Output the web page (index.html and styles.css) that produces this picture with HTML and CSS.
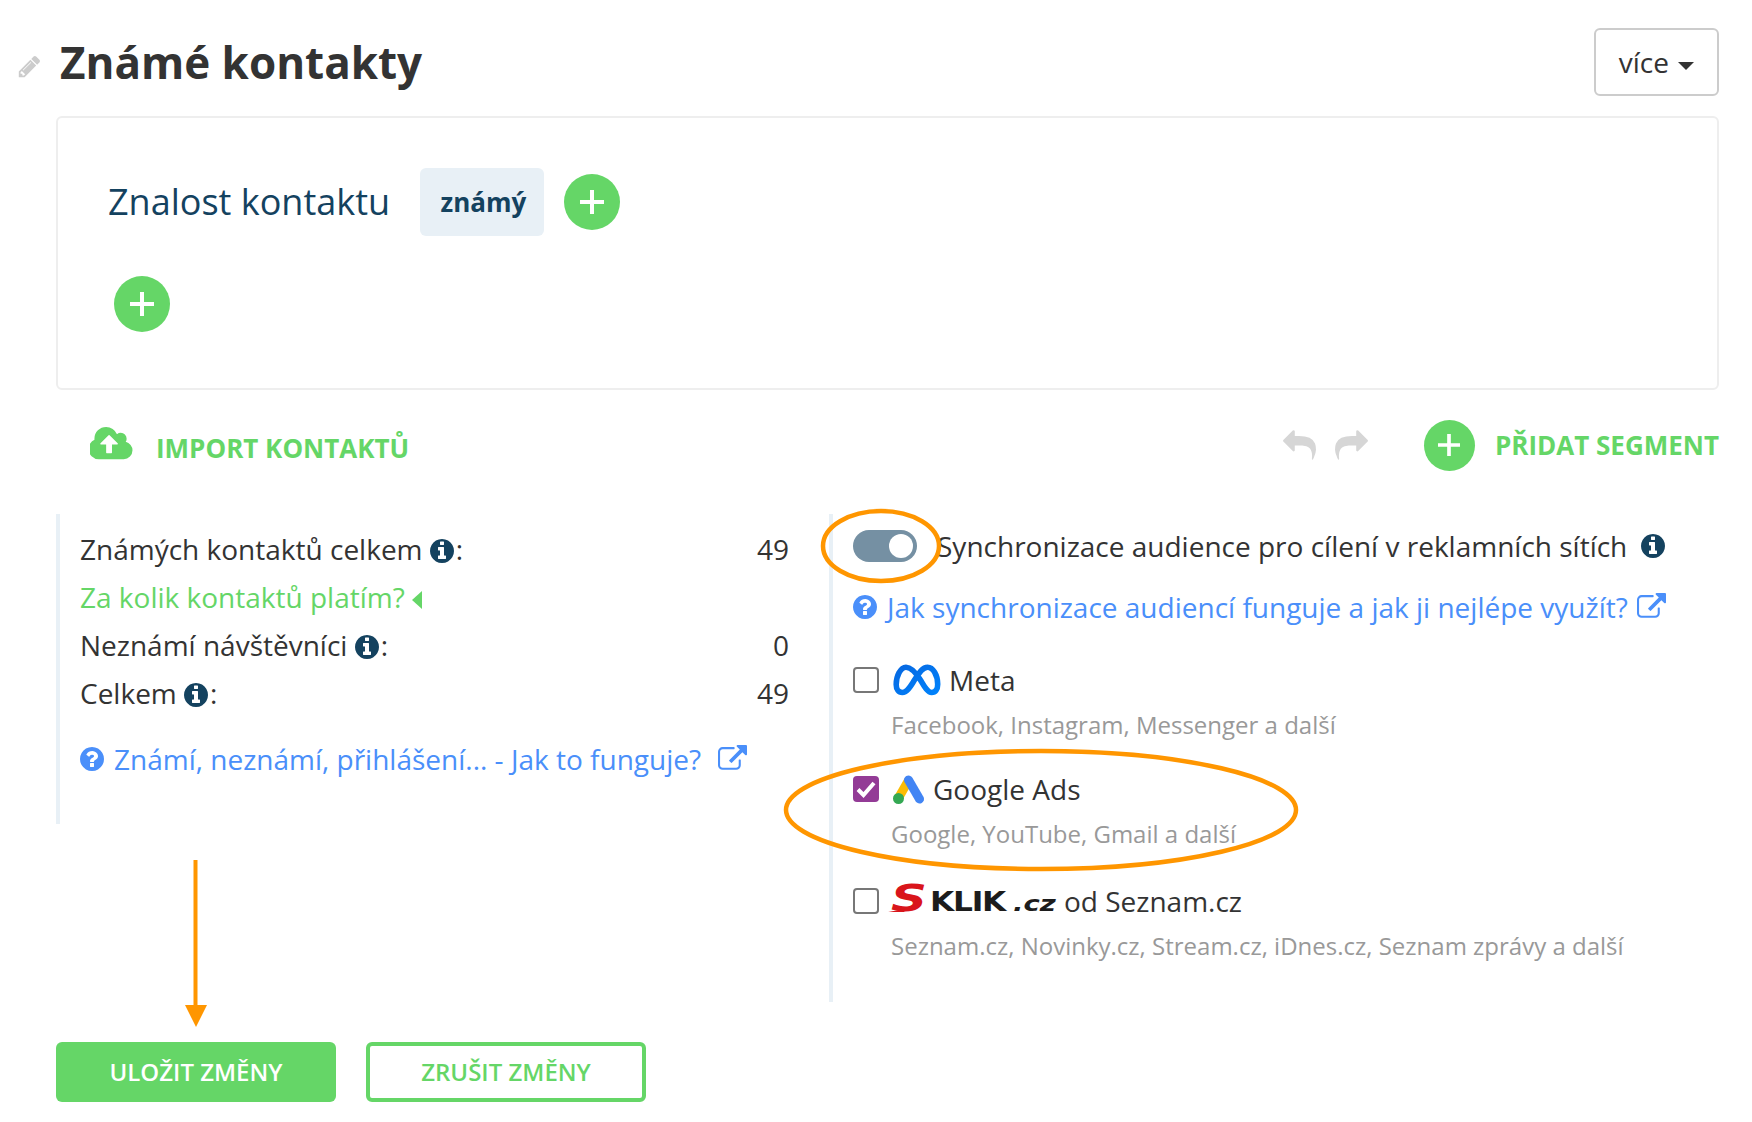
FILE: index.html
```html
<!DOCTYPE html>
<html lang="cs">
<head>
<meta charset="utf-8">
<title>Známé kontakty</title>
<link rel="stylesheet" href="styles.css">
</head>
<body>
<svg width="0" height="0" class="defs">
  <defs>
    <symbol id="i-info" viewBox="0 0 1792 1792"><path d="M1152 1376v-160q0-14-9-23t-23-9h-96v-512q0-14-9-23t-23-9h-320q-14 0-23 9t-9 23v160q0 14 9 23t23 9h96v320h-96q-14 0-23 9t-9 23v160q0 14 9 23t23 9h448q14 0 23-9t9-23zm-128-896v-160q0-14-9-23t-23-9h-192q-14 0-23 9t-9 23v160q0 14 9 23t23 9h192q14 0 23-9t9-23zm640 416q0 209-103 385.5t-279.5 279.5-385.5 103-385.5-103-279.5-279.5-103-385.5 103-385.5 279.5-279.5 385.5-103 385.5 103 279.5 279.5 103 385.5z"/></symbol>
    <symbol id="i-question" viewBox="0 0 1792 1792"><path d="M1024 1376v-192q0-14-9-23t-23-9h-192q-14 0-23 9t-9 23v192q0 14 9 23t23 9h192q14 0 23-9t9-23zm256-672q0-88-55.5-163t-138.5-116-170-41q-243 0-371 213-15 24 8 42l132 100q7 6 19 6 16 0 25-12 53-68 86-92 34-24 86-24 48 0 85.5 26t37.5 59q0 38-20 61t-68 45q-63 28-115.5 86.5t-52.5 125.5v36q0 14 9 23t23 9h192q14 0 23-9t9-23q0-19 21.5-49.5t54.5-49.5q32-18 49-28.5t46-35 44.5-48 28-60.5 12.5-81zm384 192q0 209-103 385.5t-279.5 279.5-385.5 103-385.5-103-279.5-279.5-103-385.5 103-385.5 279.5-279.5 385.5-103 385.5 103 279.5 279.5 103 385.5z"/></symbol>
    <symbol id="i-ext" viewBox="0 0 1792 1792"><path d="M1408 928v320q0 119-84.5 203.5t-203.5 84.5h-832q-119 0-203.5-84.5t-84.5-203.5v-832q0-119 84.5-203.5t203.5-84.5h704q14 0 23 9t9 23v64q0 14-9 23t-23 9h-704q-66 0-113 47t-47 113v832q0 66 47 113t113 47h832q66 0 113-47t47-113v-320q0-14 9-23t23-9h64q14 0 23 9t9 23zm384-864v512q0 26-19 45t-45 19-45-19l-176-176-652 652q-10 10-23 10t-23-10l-114-114q-10-10-10-23t10-23l652-652-176-176q-19-19-19-45t19-45 45-19h512q26 0 45 19t19 45z"/></symbol>
    <symbol id="i-undo" viewBox="0 0 1792 1792"><path d="M1792 1120q0 166-127 451-3 7-10.5 24t-13.5 30-13 22q-12 17-28 17-15 0-23.5-10t-8.5-25q0-9 2.5-26.5t2.5-23.5q5-68 5-123 0-101-17.5-181t-48.5-138.5-80-101-105.5-69.5-133-42.5-154-21.5-175.5-6h-224v256q0 26-19 45t-45 19-45-19l-512-512q-19-19-19-45t19-45l512-512q19-19 45-19t45 19 19 45v256h224q713 0 875 403 53 134 53 333z"/></symbol>
    <symbol id="i-plus" viewBox="0 0 24 24"><path d="M10 0h4v10h10v4H14v10h-4V14H0v-4h10z"/></symbol>
  </defs>
</svg>

<div class="page">
  <header class="head">
    <svg class="pencil" viewBox="0 0 1792 1792"><path d="M491 1536l91-91-235-235-91 91v107h128v128h107zm523-928q0-22-22-22-10 0-17 7l-542 542q-7 7-7 17 0 22 22 22 10 0 17-7l542-542q7-7 7-17zm-54-192l416 416-832 832h-416v-416zm683 96q0 53-37 90l-166 166-416-416 166-165q36-38 90-38 53 0 91 38l235 234q37 39 37 91z"/></svg>
    <h1 class="title">Známé kontakty</h1>
    <button class="more">více <span class="caret"></span></button>
  </header>

  <section class="box">
    <div class="box-row">
      <span class="crit">Znalost kontaktu</span>
      <span class="tag">známý</span>
      <span class="add"><svg class="plus"><use href="#i-plus"/></svg></span>
    </div>
    <div class="box-add">
      <span class="add"><svg class="plus"><use href="#i-plus"/></svg></span>
    </div>
  </section>

  <div class="actions">
    <a class="import">
      <svg class="cloud" viewBox="0 0 1920 1792"><path d="M1216 864q0-14-9-23l-352-352q-9-9-23-9t-23 9l-351 351q-10 12-10 24 0 14 9 23t23 9h224v352q0 13 9.5 22.5t22.5 9.5h192q13 0 22.5-9.5t9.5-22.5v-352h224q13 0 22.5-9.5t9.5-22.5zm640 288q0 159-112.5 271.5t-271.5 112.5h-1088q-185 0-316.5-131.5t-131.5-316.5q0-130 70-240t188-165q-2-30-2-43 0-212 150-362t362-150q156 0 285.5 87t188.5 231q71-62 166-62 106 0 181 75t75 181q0 76-41 138 130 31 213.5 135.5t83.5 238.5z"/></svg>
      <span class="import-text">IMPORT KONTAKTŮ</span>
    </a>
    <div class="segment">
      <svg class="hist"><use href="#i-undo"/></svg>
      <svg class="hist flip"><use href="#i-undo"/></svg>
      <span class="add add-seg"><svg class="plus plus-seg"><use href="#i-plus"/></svg></span>
      <span class="seg-text">PŘIDAT SEGMENT</span>
    </div>
  </div>

  <div class="cols">
    <div class="col-left">
      <div class="stat"><span>Známých kontaktů celkem <svg class="info"><use href="#i-info"/></svg>:</span><span>49</span></div>
      <div class="stat"><a class="green">Za kolik kontaktů platím? <span class="caret-left"></span></a></div>
      <div class="stat"><span>Neznámí návštěvníci <svg class="info"><use href="#i-info"/></svg>:</span><span>0</span></div>
      <div class="stat"><span>Celkem <svg class="info"><use href="#i-info"/></svg>:</span><span>49</span></div>
      <div class="help help-left">
        <svg class="q"><use href="#i-question"/></svg>
        <a>Známí, neznámí, přihlášení... - Jak to funguje?</a>
        <svg class="ext ext-left"><use href="#i-ext"/></svg>
      </div>
    </div>

    <div class="col-right">
      <div class="sync">
        <span class="toggle"><span class="knob"></span></span>
        <span>Synchronizace audience pro cílení v reklamních sítích</span>
        <svg class="info info-sync"><use href="#i-info"/></svg>
      </div>
      <div class="help help-right">
        <svg class="q"><use href="#i-question"/></svg>
        <a>Jak synchronizace audiencí funguje a jak ji nejlépe využít?</a>
        <svg class="ext"><use href="#i-ext"/></svg>
      </div>

      <div class="platform first">
        <label class="plabel">
          <input type="checkbox" class="check">
          <svg class="logo-meta" viewBox="0 0 48 32">
            <defs><linearGradient id="mg" x1="0" y1="0" x2="1" y2="1"><stop offset="0" stop-color="#0668e1"/><stop offset="1" stop-color="#0082fb"/></linearGradient></defs>
            <path d="M3.2 20.5C3.2 12 7.6 3.2 13 3.2c5.4 0 10.600 6.500 14.600 13 3.600 6 6.800 12.300 11.100 12.300 3.700 0 6-3 6-8.200C44.700 11 39.900 3.200 34.600 3.200 29 3.200 25.300 10 21 16.800 17.200 22.800 14 28.500 9.300 28.500 5.600 28.500 3.200 25.500 3.200 20.500Z" fill="none" stroke="url(#mg)" stroke-width="5.600"/>
          </svg>
          <span>Meta</span>
        </label>
        <div class="psub">Facebook, Instagram, Messenger a další</div>
      </div>

      <div class="platform second">
        <label class="plabel">
          <input type="checkbox" class="check" checked>
          <svg class="logo-ads" viewBox="0 0 32 29">
            <path d="M15.500 5.500 6 22" stroke="#fbbc04" stroke-width="9" fill="none"/>
            <path d="M15.500 5 26.500 24" stroke="#4285f4" stroke-width="9" stroke-linecap="round" fill="none"/>
            <circle cx="5.500" cy="23.500" r="5.500" fill="#34a853"/>
          </svg>
          <span>Google Ads</span>
        </label>
        <div class="psub">Google, YouTube, Gmail a další</div>
      </div>

      <div class="platform third">
        <label class="plabel">
          <input type="checkbox" class="check">
          <span class="sklik"><span class="sklik-s">S</span><span class="sklik-k">KLIK</span><span class="sklik-c">.cz</span></span>
          <span>od Seznam.cz</span>
        </label>
        <div class="psub">Seznam.cz, Novinky.cz, Stream.cz, iDnes.cz, Seznam zprávy a další</div>
      </div>
    </div>
  </div>

  <div class="buttons">
    <button class="btn btn-save">ULOŽIT ZMĚNY</button>
    <button class="btn btn-cancel">ZRUŠIT ZMĚNY</button>
  </div>

  <svg class="marks" viewBox="0 0 1752 1122">
    <ellipse class="thick" cx="881" cy="546" rx="58" ry="35"/>
    <ellipse class="thick" cx="1041" cy="810" rx="255" ry="59"/>
    <path d="M195.500 860V1006" />
    <polygon points="185,1005 207,1005 196,1027"/>
  </svg>
</div>
</body>
</html>
```

FILE: styles.css
```css
* { box-sizing: border-box; }
html, body { margin: 0; padding: 0; background: #fff; }
body { font-family: "Open Sans", "Noto Sans", sans-serif; color: #333; font-size: 28px; }
.defs { position: absolute; }
.page { position: relative; width: 1752px; height: 1122px; padding: 28px 33px 0 0; overflow: hidden; }

.head { display: flex; align-items: center; height: 68px; padding-left: 17px; margin-bottom: 20px; }
.pencil { width: 25px; height: 25px; fill: #ccc; margin: 8px 18px 0 0; }
.title { margin: 0; font-size: 44px; font-weight: 700; color: #333; flex: 1; line-height: 68px; }
.more { width: 125px; height: 68px; border: 2px solid #ccc; border-radius: 6px; background: #fff; color: #333; font: 400 28px "Open Sans", sans-serif; padding: 0; }
.caret { display: inline-block; border-top: 8px solid #333; border-left: 8px solid transparent; border-right: 8px solid transparent; vertical-align: middle; margin-left: 2px; }

.box { margin-left: 56px; height: 274px; border: 2px solid #eee; border-radius: 6px; padding: 50px 0 0 50px; }
.box-row { display: flex; align-items: center; height: 68px; }
.crit { font-size: 36px; font-weight: 400; color: #14425f; width: 312px; white-space: nowrap; margin-top: -2px; }
.tag { width: 124px; height: 68px; background: #e8f0f6; border-radius: 6px; color: #14425f; font-weight: 700; font-size: 26px; display: flex; align-items: center; justify-content: center; padding-left: 3px; margin-right: 20px; }
.add { width: 56px; height: 56px; border-radius: 50%; background: #65d667; display: flex; align-items: center; justify-content: center; flex: none; }
.plus { width: 24px; height: 24px; fill: #fff; }
.box-add { margin: 40px 0 0 6px; }

.actions { display: flex; justify-content: space-between; margin: 30px 0 0 56px; height: 50px; }
.import { display: flex; align-items: center; padding-left: 34px; color: #65d667; font-weight: 700; font-size: 26px; gap: 22px; }
.import-text { margin-top: 6px; }
.cloud { width: 44px; height: 41px; fill: #65d667; margin-top: -2px; }
.segment { display: flex; align-items: center; color: #65d667; font-weight: 700; font-size: 26px; }
.hist { width: 33px; height: 33px; fill: #d6d6d6; margin-right: 19px; }
.flip { transform: scaleX(-1); margin-right: 56px; }
.add-seg { width: 51px; height: 51px; margin-right: 20px; }
.plus-seg { width: 22px; height: 22px; }
.seg-text { white-space: nowrap; }

.cols { display: grid; grid-template-columns: 773px 1fr; margin: 44px 0 0 56px; }
.col-left { height: 310px; width: 733px; border-left: 4px solid #e8f0f6; padding: 11px 0 0 20px; }
.stat { display: flex; justify-content: space-between; line-height: 48px; height: 48px; white-space: nowrap; }
.green { color: #65d667; }
.caret-left { display: inline-block; border-right: 10px solid #65d667; border-top: 9px solid transparent; border-bottom: 9px solid transparent; vertical-align: -1px; margin-left: 0; }
.info { width: 28px; height: 28px; fill: #14425f; vertical-align: -5px; margin: 0 0 0 -2px; }
.help { display: flex; align-items: center; height: 48px; color: #4a8ffa; white-space: nowrap; }
.help-left { margin-top: 18px; }
.q { width: 28px; height: 28px; fill: #4a8ffa; margin: 0 8px 0 -2px; flex: none; }
.ext { width: 29px; height: 29px; fill: #4a8ffa; margin-left: 9px; margin-top: 0; flex: none; }
.ext-left { margin-left: 17px; }

.col-right { height: 488px; border-left: 4px solid #e8f0f6; padding: 8px 0 0 20px; }
.sync { display: flex; align-items: center; height: 48px; white-space: nowrap; }
.toggle { width: 64px; height: 32px; border-radius: 16px; background: #7590a3; display: flex; align-items: center; justify-content: flex-end; padding-right: 4px; margin-right: 20px; flex: none; }
.knob { width: 24px; height: 24px; border-radius: 50%; background: #fff; }
.info-sync { margin-left: 12px; }
.help-right { margin-top: 13px; }

.platform.first { margin-top: 25px; }
.platform.second { margin-top: 20px; }
.platform.third { margin-top: 23px; }
.plabel { display: flex; align-items: center; height: 48px; white-space: nowrap; }
.check { appearance: none; width: 26px; height: 26px; margin: 0 14px 0 0; border: 2px solid #777; border-radius: 4px; background: #fff; flex: none; }
.check:checked { border: 0; background: #933b96 url("data:image/svg+xml,%3Csvg xmlns='http://www.w3.org/2000/svg' viewBox='0 0 26 26'%3E%3Cpath d='M5 13.500l5.500 5.500L21 7' fill='none' stroke='%23fff' stroke-width='4'/%3E%3C/svg%3E") center/100% no-repeat; }
.logo-meta { width: 48px; height: 32px; margin-right: 8px; }
.logo-ads { width: 32px; height: 29px; margin-right: 8px; }
.psub { padding-left: 38px; height: 40px; margin-top: 1px; line-height: 40px; font-size: 24px; color: #999; white-space: nowrap; }

.sklik { display: flex; align-items: baseline; width: 163px; margin-right: 8px; font-family: "DejaVu Sans", sans-serif; font-weight: 700; color: #1c1c1c; line-height: 34px; }
.sklik-s { position: relative; display: inline-block; width: 37px; font-size: 37px; color: #d9151b; font-style: italic; transform: scaleX(1.35); transform-origin: 6px 50%; }
.sklik-s::after { content: ""; position: absolute; left: -2px; bottom: 4px; border-top: 3px solid transparent; border-right: 12px solid #d9151b; }
.sklik-k { display: inline-block; width: 83px; font-size: 26px; letter-spacing: -1px; transform: scaleX(1.2); transform-origin: 0 50%; }
.sklik-c { display: inline-block; width: 43px; font-size: 22px; font-style: italic; transform: scaleX(1.25); transform-origin: 0 50%; }

.buttons { display: flex; gap: 30px; margin: 40px 0 0 56px; }
.btn { width: 280px; height: 60px; border-radius: 6px; font: 600 24px "Open Sans", sans-serif; padding: 0 0 2px; }
.btn-save { background: #65d667; color: #fff; border: 0; }
.btn-cancel { background: #fff; color: #65d667; border: 4px solid #65d667; }

.marks { position: absolute; left: 0; top: 0; width: 1752px; height: 1122px; pointer-events: none; fill: none; stroke: #ff9600; stroke-width: 4px; }
.marks .thick { stroke-width: 4.5px; }
.marks polygon { fill: #ff9600; stroke: none; }
```
